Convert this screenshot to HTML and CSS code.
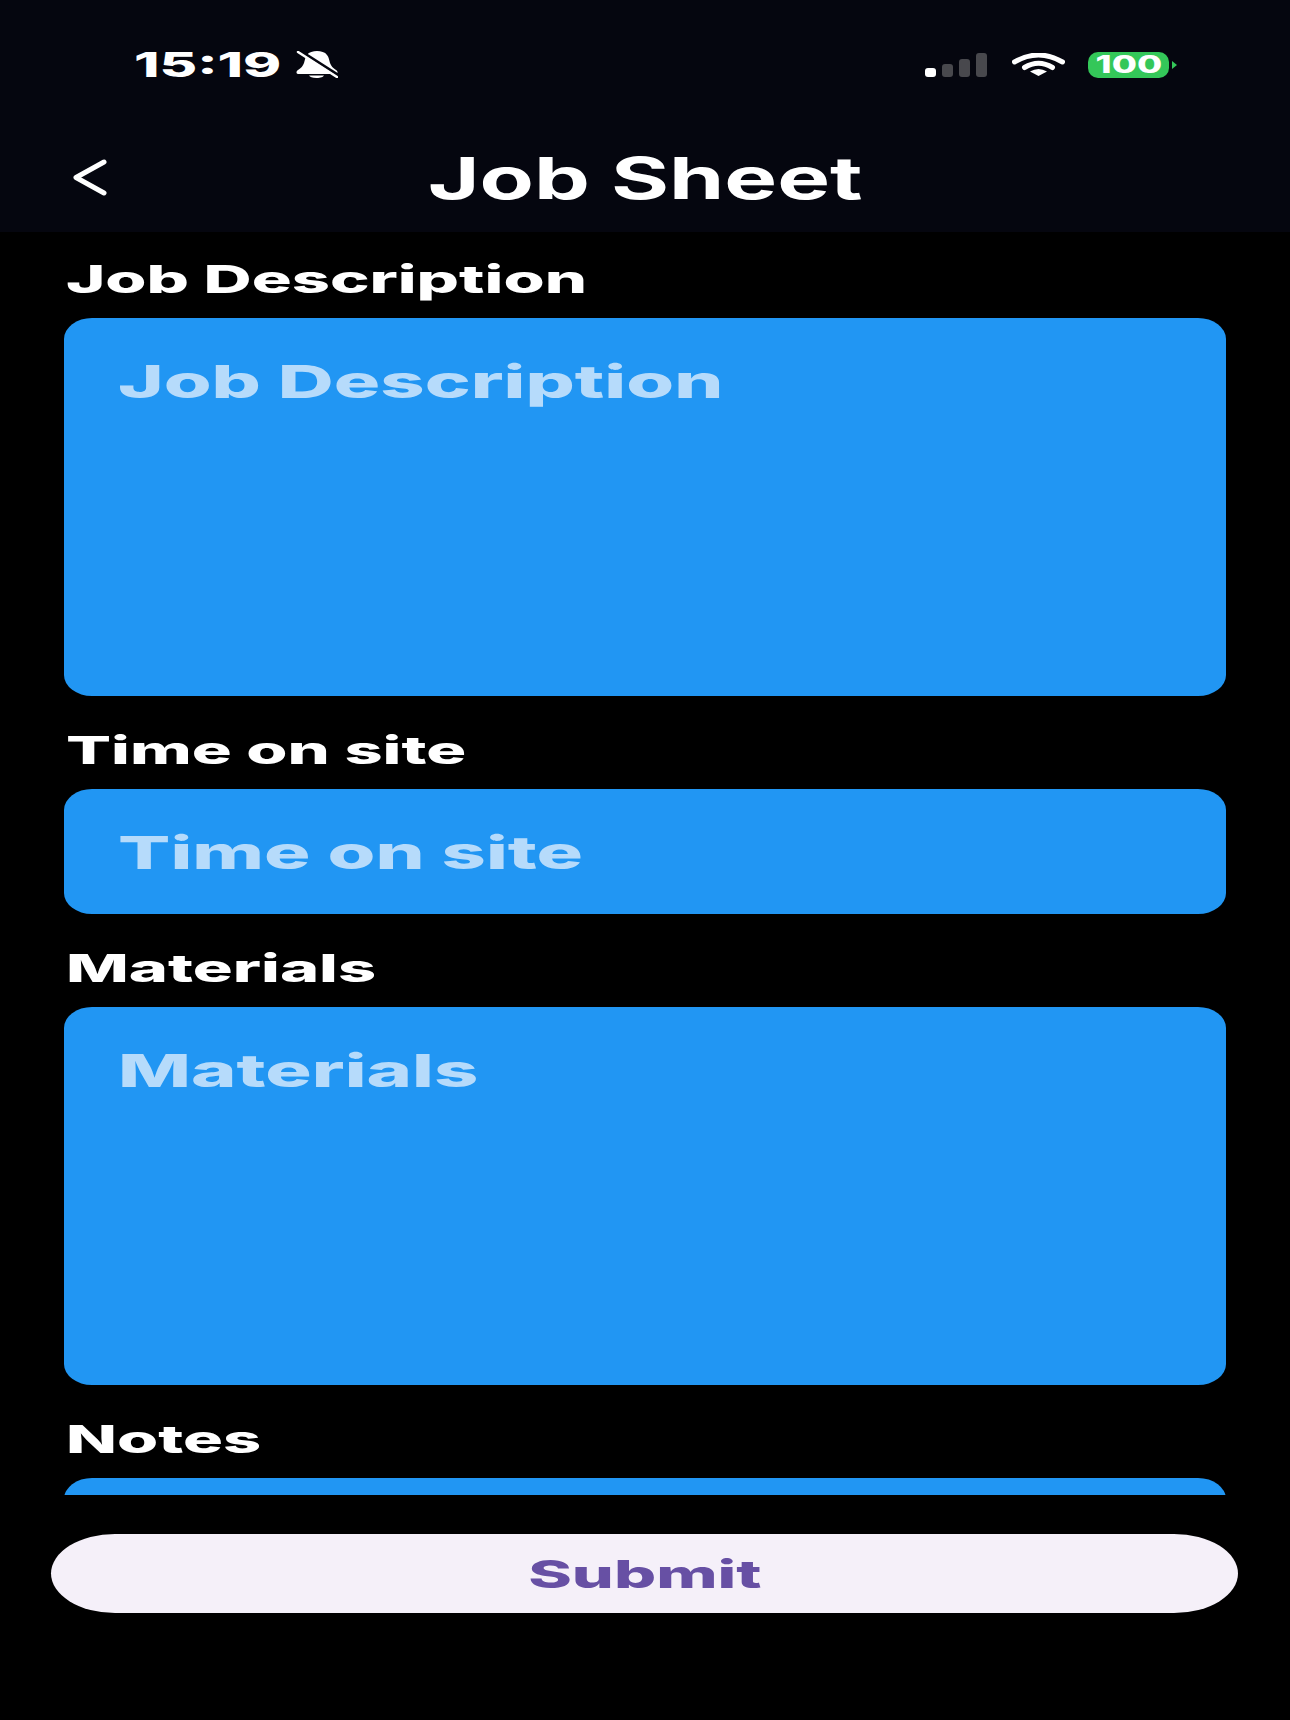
FILE: index.html

```html
<!DOCTYPE html>
<html lang="en">
<head>
	<meta charset="UTF-8">
	<title>Job Sheet</title>
	<link rel="stylesheet" href="styles.css">
</head>
<body>
	<!-- status bar + nav -->
	<header class="top">
		<div class="status">
			<div class="status-left">
				<span class="clock"><span class="wide">15:19</span></span>
				<svg class="bell" viewBox="0 0 43 27">
					<path fill="#fff" d="M22 0c4 0 8 1 10 4 2 2 2 5 3 8 1 3 3 5 6 7 2 1 2 4 0 4H3c-2 0-2-3 0-4 3-2 5-4 6-7 1-3 1-6 3-8 2-3 6-4 10-4z"/>
					<path fill="#fff" d="M14 24.500h15c-1 1.500-3 2.500-7.500 2.500S15 26 14 24.500z"/>
					<path stroke="#05060f" stroke-width="3" d="M3 -1.500L43 24"/>
					<path stroke="#fff" stroke-width="2.500" stroke-linecap="round" d="M3 1L42 26"/>
				</svg>
			</div>
			<div class="status-right">
				<div class="signal">
					<i class="on"></i><i></i><i></i><i></i>
				</div>
				<svg class="wifi" viewBox="0 0 53 23">
					<path fill="none" stroke="#fff" stroke-width="5" stroke-linecap="round" d="M2.500 9Q26.500 -5 50.500 9"/>
					<path fill="none" stroke="#fff" stroke-width="5" stroke-linecap="round" d="M12.500 14.500Q26.500 6 40.500 14.500"/>
					<path fill="#fff" d="M18 18.500Q26.500 13.500 35 18.500L26.500 23Z"/>
				</svg>
				<div class="battery"><span class="wide">100</span></div>
				<div class="battery-tip"></div>
			</div>
		</div>
		<nav class="nav">
			<svg class="back" viewBox="0 0 35 37">
				<path fill="none" stroke="#fff" stroke-width="5" stroke-linecap="round" stroke-linejoin="round" d="M32 3L4 18.500L32 34"/>
			</svg>
			<h1 class="title"><span class="wide">Job Sheet</span></h1>
		</nav>
	</header>

	<!-- form -->
	<main class="form">
		<div class="field">
			<div class="label"><span class="wide">Job Description</span></div>
			<div class="box box-big"><span class="wide">Job Description</span></div>
		</div>
		<div class="field">
			<div class="label"><span class="wide">Time on site</span></div>
			<div class="box box-small"><span class="wide">Time on site</span></div>
		</div>
		<div class="field">
			<div class="label"><span class="wide">Materials</span></div>
			<div class="box box-big"><span class="wide">Materials</span></div>
		</div>
		<div class="field">
			<div class="label"><span class="wide">Notes</span></div>
			<div class="box box-big"></div>
		</div>
	</main>

	<div class="bottom">
		<button class="submit"><span class="wide">Submit</span></button>
	</div>
</body>
</html>
```

FILE: styles.css

```css
*{margin:0;padding:0;box-sizing:border-box;}
html,body{height:100%;}
body{background:#000;color:#fff;font-family:Inter,"Liberation Sans",sans-serif;overflow:hidden;}

/* the capture is stretched sideways, so text is widened */
.wide{display:inline-block;white-space:nowrap;}

/* status bar */
.top{height:232px;background:#05060f;padding-top:51px;}
.status{height:27px;display:flex;justify-content:space-between;align-items:center;padding:0 113px 0 134px;}
.status-left{display:flex;align-items:center;gap:16px;}
.clock{display:block;width:145px;font-size:34px;font-weight:800;line-height:27px;}
.clock .wide{transform:scaleX(1.7);transform-origin:left center;}
.bell{width:43px;height:27px;}
.status-right{display:flex;align-items:center;}
.signal{display:flex;align-items:flex-end;gap:6px;height:25px;margin-right:25px;}
.signal i{display:block;width:11px;border-radius:3px;background:#48484d;}
.signal i:nth-child(1){height:9px;background:#fff;}
.signal i:nth-child(2){height:13px;}
.signal i:nth-child(3){height:18px;}
.signal i:nth-child(4){height:24px;}
.wifi{width:53px;height:23px;margin-right:23px;}
.battery{width:81px;height:26px;border-radius:10px;background:#34c759;color:#fff;font-size:24px;font-weight:800;line-height:26px;text-align:center;}
.battery .wide{transform:scaleX(1.52);}
.battery-tip{width:0;height:0;margin-left:3px;border-left:5px solid #34c759;border-top:4px solid transparent;border-bottom:4px solid transparent;}

/* nav */
.nav{height:109px;margin-top:45px;display:grid;grid-template-columns:1fr auto 1fr;align-items:center;padding-left:72px;}
.back{width:35px;height:37px;}
.title{grid-column:2;font-size:58px;font-weight:700;line-height:60px;margin-left:-72px;}
.title .wide{transform:scaleX(1.53);}

/* fields */
.form{height:1263px;overflow:hidden;padding:0 64px;}
.field{margin-bottom:7px;}
.label{height:86px;padding:9px 0 0 2px;font-size:38.500px;font-weight:800;line-height:76px;}
.label .wide{transform:scaleX(1.73);transform-origin:left center;}
.box{background:#2196f3;border-radius:28px/21px;padding:34px 54px;color:#b6dbfb;font-size:45px;font-weight:800;line-height:60px;}
.box .wide{transform:scaleX(1.72);transform-origin:left center;}
.box-big{height:378px;}
.box-small{height:125px;}

/* submit */
.bottom{padding:39px 52px 0 51px;}
.submit{display:block;width:100%;height:79px;border:0;border-radius:64px/39.500px;background:#f5f0f9;color:#6750a4;font-family:Inter,"Liberation Sans",sans-serif;font-size:38.500px;font-weight:800;}
.submit .wide{transform:scaleX(1.72);}
```
